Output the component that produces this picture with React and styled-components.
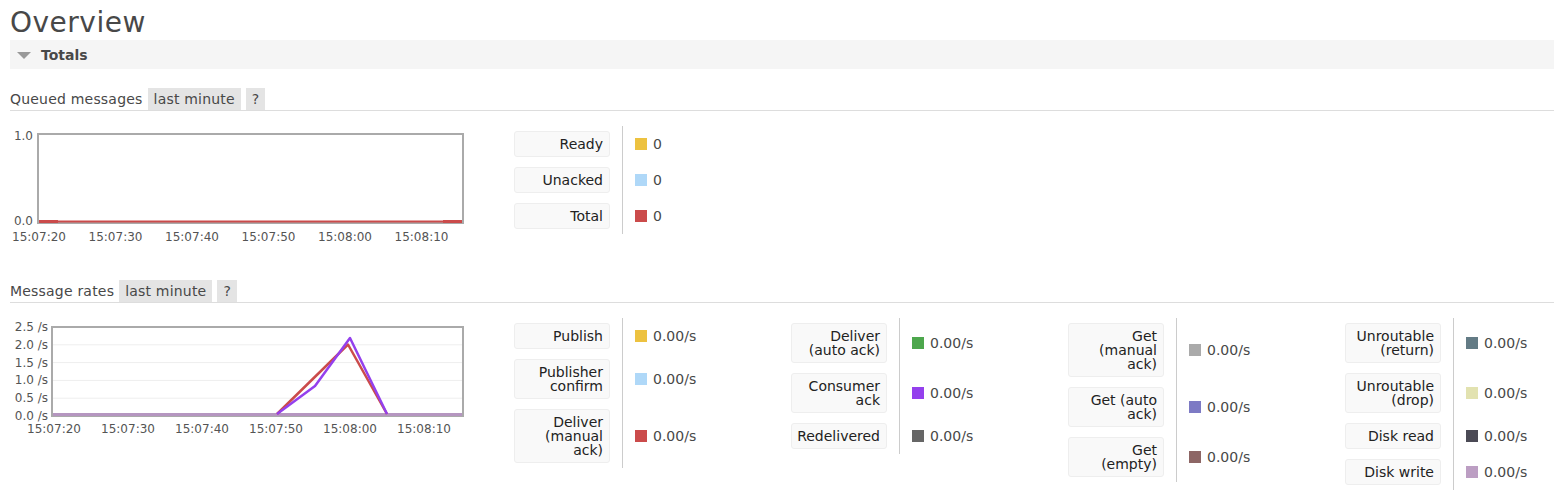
import React from "react";
import styled, { createGlobalStyle } from "styled-components";

const GlobalStyle = createGlobalStyle`
  body {
    margin: 0;
    background: #fff;
    font-family: "DejaVu Sans", Verdana, sans-serif;
    font-size: 14px;
    color: #484848;
  }
`;

const Page = styled.div`
  padding: 7px 0 0 10px;
`;

const Title = styled.h1`
  margin: 0 0 1px;
  font-size: 28px;
  line-height: 32px;
  letter-spacing: 0.5px;
  font-weight: normal;
  color: #484848;
`;

const SectionBar = styled.div`
  height: 29px;
  background: #f5f5f5;
  display: flex;
  align-items: center;
  gap: 10px;
  padding-left: 7px;
  font-weight: bold;
  color: #484848;
`;

const Triangle = styled.span`
  width: 0;
  height: 0;
  margin-top: 2px;
  border-left: 7px solid transparent;
  border-right: 7px solid transparent;
  border-top: 7px solid #999;
`;

const SubHeading = styled.div`
  display: flex;
  align-items: flex-end;
  height: 22px;
  margin-top: ${(p) => p.$top}px;
  border-bottom: 1px solid #ddd;
  line-height: 22px;
  letter-spacing: 0.2px;
`;

const Tag = styled.span`
  margin-left: 5px;
  padding: 0 6px;
  background: #e4e4e4;
  color: #484848;
`;

const Content = styled.div`
  display: flex;
  align-items: flex-start;
  margin-top: 15px;
`;

const ChartBlock = styled.div`
  width: 504px;
  flex: none;
`;

const LegendTable = styled.div`
  display: grid;
  grid-template-columns: 108px 1fr;
  width: 277px;
  flex: none;
`;

const LabelCell = styled.div`
  padding: 5px 12px 5px 0;
`;

const LabelBox = styled.div`
  width: 96px;
  box-sizing: border-box;
  background: #f9f9f9;
  border: 1px solid #eee;
  border-radius: 3px;
  padding: 5px 6px 5px 5px;
  text-align: right;
  line-height: 14px;
  color: #222;
  white-space: nowrap;
`;

const ValueCell = styled.div`
  display: flex;
  align-items: center;
  gap: 6px;
  padding-left: 12px;
  border-left: 1px solid #ccc;
`;

const Swatch = styled.span`
  width: 12px;
  height: 12px;
  background: ${(p) => p.$color};
`;

const AxisText = styled.text`
  font-family: "DejaVu Sans", Verdana, sans-serif;
  font-size: 12px;
  fill: #545454;
`;

const queued = [
  { label: ["Ready"], color: "#edc240", value: "0" },
  { label: ["Unacked"], color: "#afd8f8", value: "0" },
  { label: ["Total"], color: "#cb4b4b", value: "0" },
];

const rates = [
  [
    { label: ["Publish"], color: "#edc240" },
    { label: ["Publisher", "confirm"], color: "#afd8f8" },
    { label: ["Deliver", "(manual", "ack)"], color: "#cb4b4b" },
  ],
  [
    { label: ["Deliver", "(auto ack)"], color: "#4da74d" },
    { label: ["Consumer", "ack"], color: "#9440ed" },
    { label: ["Redelivered"], color: "#666666" },
  ],
  [
    { label: ["Get", "(manual", "ack)"], color: "#aaaaaa" },
    { label: ["Get (auto", "ack)"], color: "#7d7ac4" },
    { label: ["Get", "(empty)"], color: "#8d6665" },
  ],
  [
    { label: ["Unroutable", "(return)"], color: "#637b85" },
    { label: ["Unroutable", "(drop)"], color: "#e2e2b0" },
    { label: ["Disk read"], color: "#4b4a55" },
    { label: ["Disk write"], color: "#bc9ec3" },
  ],
];

function Legend({ rows }) {
  return (
    <LegendTable>
      {rows.map((r) => (
        <React.Fragment key={r.label.join(" ")}>
          <LabelCell>
            <LabelBox>
              {r.label.map((line, i) => (
                <div key={i}>{line}</div>
              ))}
            </LabelBox>
          </LabelCell>
          <ValueCell>
            <Swatch $color={r.color} />
            <span>{r.value || "0.00/s"}</span>
          </ValueCell>
        </React.Fragment>
      ))}
    </LegendTable>
  );
}

const times = ["15:07:20", "15:07:30", "15:07:40", "15:07:50", "15:08:00", "15:08:10"];

function QueuedChart() {
  const xs = [29, 105.5, 182, 258.5, 335, 411.5];
  return (
    <svg width="480" height="125">
      <rect x="28" y="8" width="425" height="89" fill="#fff" stroke="#aaa" strokeWidth="2" />
      <line x1="29" y1="95.5" x2="452" y2="95.5" stroke="#cb4b4b" strokeWidth="2" />
      <rect x="29" y="94" width="19" height="3" fill="#cb4b4b" />
      <rect x="433" y="94" width="19" height="3" fill="#cb4b4b" />
      <AxisText x="23" y="14" textAnchor="end">1.0</AxisText>
      <AxisText x="23" y="99" textAnchor="end">0.0</AxisText>
      {times.map((t, i) => (
        <AxisText key={t} x={xs[i]} y="115" textAnchor="middle">
          {t}
        </AxisText>
      ))}
    </svg>
  );
}

function RatesChart() {
  const xs = [44, 118, 192, 266, 340, 414];
  const ticks = ["0.0", "0.5", "1.0", "1.5", "2.0", "2.5"];
  const yOf = (v) => 98 - v * 35.6;
  return (
    <svg width="480" height="125">
      <rect x="42" y="9" width="411" height="89" fill="#fff" />
      {[0.5, 1, 1.5, 2].map((v) => (
        <line key={v} x1="43" x2="452" y1={yOf(v)} y2={yOf(v)} stroke="#eee" strokeWidth="1" />
      ))}
      <rect x="42" y="9" width="411" height="89" fill="none" stroke="#aaa" strokeWidth="2" />
      <line x1="43" y1="96.5" x2="452" y2="96.5" stroke="#b596c0" strokeWidth="3" />
      <polyline points="267,96 338,26.5 377,96" fill="none" stroke="#cb4b4b" strokeWidth="2.5" strokeLinejoin="round" />
      <polyline points="267,96 305,68 340,20 377,96" fill="none" stroke="#9440ed" strokeWidth="2.5" strokeLinejoin="round" />
      {ticks.map((t, i) => (
        <AxisText key={t} x="38" y={yOf(i * 0.5) + 4} textAnchor="end">
          {t} /s
        </AxisText>
      ))}
      {times.map((t, i) => (
        <AxisText key={t} x={xs[i]} y="115" textAnchor="middle">
          {t}
        </AxisText>
      ))}
    </svg>
  );
}

export default function App() {
  return (
    <>
      <GlobalStyle />
      <Page>
        <Title>Overview</Title>
        <SectionBar>
          <Triangle />
          <span>Totals</span>
        </SectionBar>

        <SubHeading $top={19}>
          <span>Queued messages</span>
          <Tag>last minute</Tag>
          <Tag>?</Tag>
        </SubHeading>
        <Content>
          <ChartBlock>
            <QueuedChart />
          </ChartBlock>
          <Legend rows={queued} />
        </Content>

        <SubHeading $top={26}>
          <span>Message rates</span>
          <Tag>last minute</Tag>
          <Tag>?</Tag>
        </SubHeading>
        <Content>
          <ChartBlock>
            <RatesChart />
          </ChartBlock>
          {rates.map((col, i) => (
            <Legend key={i} rows={col} />
          ))}
        </Content>
      </Page>
    </>
  );
}
